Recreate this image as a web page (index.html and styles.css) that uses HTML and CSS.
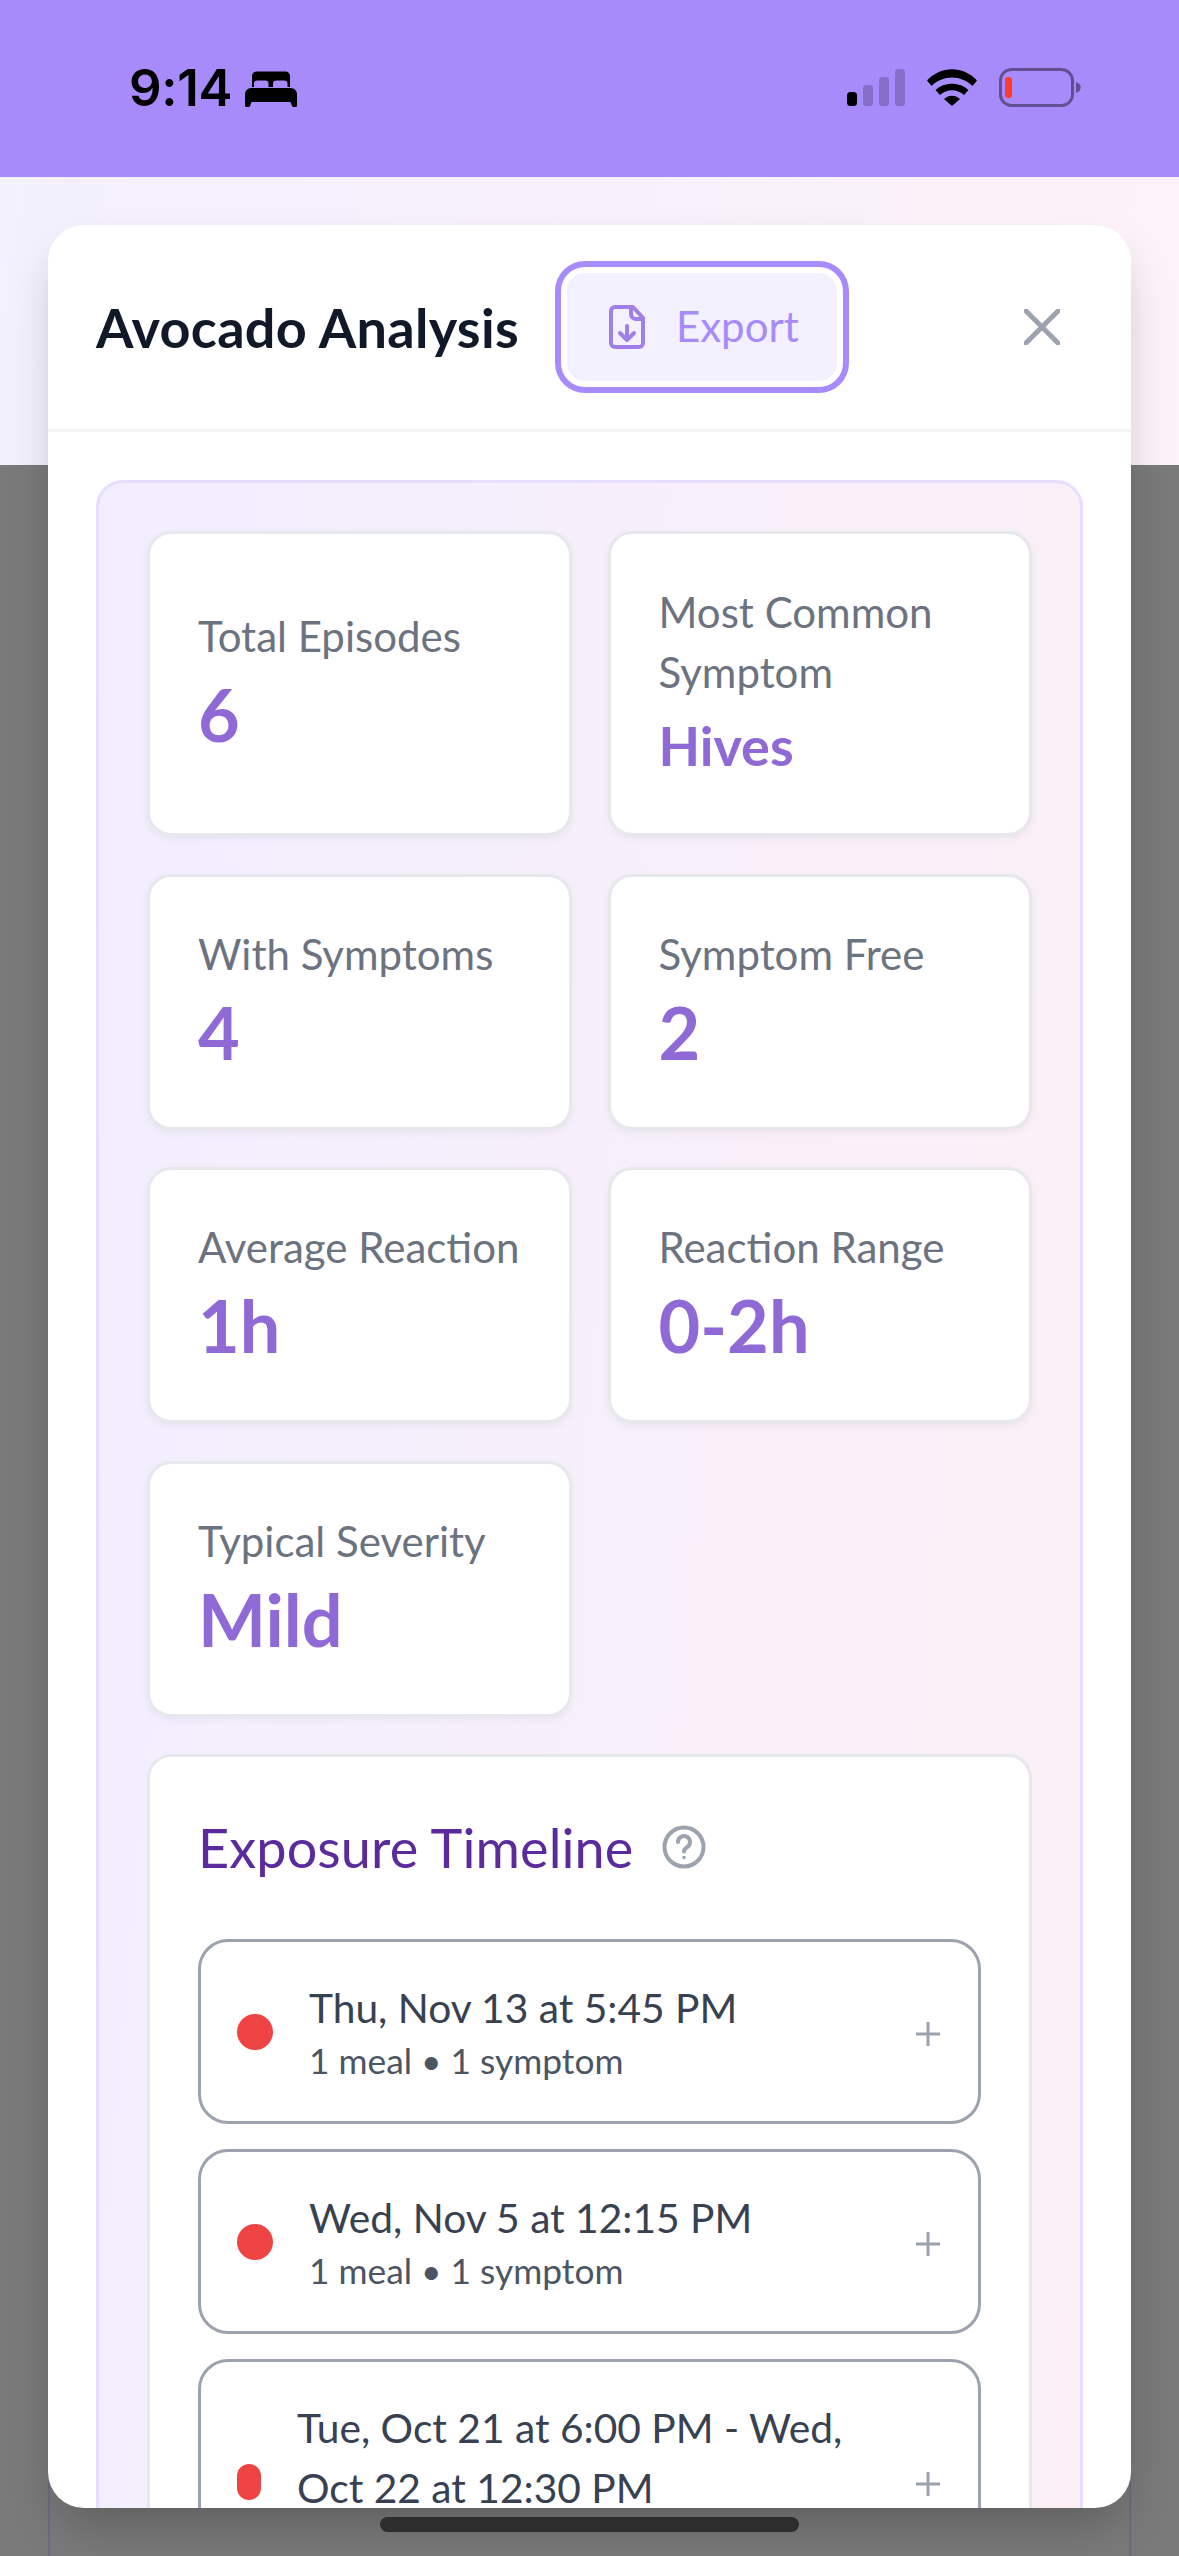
FILE: index.html
```html
<!DOCTYPE html>
<html lang="en">
<head>
<meta charset="utf-8">
<title>Avocado Analysis</title>
<link rel="stylesheet" href="styles.css">
</head>
<body>
<div class="screen">
  <header class="status">
    <div class="status-left">
      <span class="time">9:14</span>
      <svg class="bed" viewBox="0 0 52 36" aria-hidden="true"><path d="M7 16V5a4.500 4.500 0 0 1 4.500-4.500h29A4.500 4.500 0 0 1 45 5v11h-2.500v-3.500c0-2-1-3-3.500-3h-7.500c-2.500 0-3.500 1-3.500 3V16h-4.500v-3.500c0-2-1-3-3.500-3h-7.500c-2.500 0-3.500 1-3.500 3V16z"/><path d="M6 17h40a6 6 0 0 1 6 6v11.500a1.500 1.500 0 0 1-1.500 1.500h-2a1.500 1.500 0 0 1-1.500-1l-1.500-4H6.500L5 35a1.500 1.500 0 0 1-1.500 1h-2A1.500 1.500 0 0 1 0 34.500V23a6 6 0 0 1 6-6z"/></svg>
    </div>
    <div class="status-right">
      <svg class="signal" viewBox="0 0 58 37" aria-hidden="true"><rect x="0" y="23" width="10" height="14" rx="3.500"/><rect class="dim" x="16" y="16" width="10" height="21" rx="3"/><rect class="dim" x="32" y="8" width="10" height="29" rx="3"/><rect class="dim" x="48" y="0" width="10" height="37" rx="3"/></svg>
      <svg class="wifi" viewBox="0 0 50 37" aria-hidden="true"><path d="M0 11.500C14-3.500 36-3.500 50 11.500l-4.500 5.500C34 5.500 16 5.500 4.500 17z"/><path d="M8.500 21C17 12.500 33 12.500 41.500 21l-4.500 5C30.500 19.500 19.500 19.500 13 26z"/><path d="M17 30c5-4.500 11-4.500 16 0l-8 7z"/></svg>
      <svg class="battery" viewBox="0 0 82 39" aria-hidden="true"><rect class="bat-shell" x="1.500" y="1.500" width="72" height="36" rx="11"/><rect class="bat-level" x="6" y="9" width="7" height="21" rx="3"/><path class="bat-nub" d="M77 14c3 1 4.700 3 4.700 5.500S80 24 77 25z"/></svg>
    </div>
  </header>
  <div class="backdrop-top"></div>
  <div class="backdrop-rest"><div class="page-card"></div></div>

  <div class="overlay">
    <section class="modal">
      <div class="modal-head">
        <h1 class="modal-title">Avocado Analysis</h1>
        <button class="export" type="button">
          <svg class="export-icon" viewBox="0 0 36 44" aria-hidden="true"><path d="M6 2h18l10 11v25a4 4 0 0 1-4 4H6a4 4 0 0 1-4-4V6a4 4 0 0 1 4-4z"/><path d="M22 2v7a5 5 0 0 0 5 5h7"/><path d="M18 21v14M11 28l7 7 7-7"/></svg>
          <span class="export-label">Export</span>
        </button>
        <svg class="close" viewBox="0 0 36 36" aria-hidden="true"><path d="M2 2l32 32M34 2L2 34"/></svg>
      </div>
      <div class="modal-body">
        <div class="panel">
          <div class="stats">
            <div class="stat stat-tall"><div class="stat-label">Total Episodes</div><div class="stat-value">6</div></div>
            <div class="stat stat-tall"><div class="stat-label">Most Common Symptom</div><div class="stat-value stat-value-sm">Hives</div></div>
            <div class="stat"><div class="stat-label">With Symptoms</div><div class="stat-value">4</div></div>
            <div class="stat"><div class="stat-label">Symptom Free</div><div class="stat-value">2</div></div>
            <div class="stat"><div class="stat-label">Average Reaction</div><div class="stat-value">1h</div></div>
            <div class="stat"><div class="stat-label">Reaction Range</div><div class="stat-value">0-2h</div></div>
            <div class="stat"><div class="stat-label">Typical Severity</div><div class="stat-value">Mild</div></div>
          </div>
          <div class="timeline">
            <div class="timeline-head">
              <h2 class="timeline-title">Exposure Timeline</h2>
              <svg class="help" viewBox="0 0 44 44" aria-hidden="true"><circle cx="22" cy="22" r="19.500"/><path d="M16 17a6 6 0 1 1 9 5.200c-2 1.200-3 2.300-3 4.300"/><circle class="help-dot" cx="22" cy="32.500" r="1.800"/></svg>
            </div>
            <div class="rows">
              <div class="row">
                <span class="dot"></span>
                <div class="row-text"><div class="row-date">Thu, Nov 13 at 5:45 PM</div><div class="row-sub">1 meal • 1 symptom</div></div>
                <svg class="plus" viewBox="0 0 24 24" aria-hidden="true"><path d="M12 0v24M0 12h24"/></svg>
              </div>
              <div class="row">
                <span class="dot"></span>
                <div class="row-text"><div class="row-date">Wed, Nov 5 at 12:15 PM</div><div class="row-sub">1 meal • 1 symptom</div></div>
                <svg class="plus" viewBox="0 0 24 24" aria-hidden="true"><path d="M12 0v24M0 12h24"/></svg>
              </div>
              <div class="row row-long">
                <span class="dot dot-long"></span>
                <div class="row-text"><div class="row-date">Tue, Oct 21 at 6:00 PM - Wed, Oct 22 at 12:30 PM</div></div>
                <svg class="plus" viewBox="0 0 24 24" aria-hidden="true"><path d="M12 0v24M0 12h24"/></svg>
              </div>
            </div>
          </div>
        </div>
      </div>
    </section>
  </div>
  <div class="home-bar"></div>
</div>
</body>
</html>
```
FILE: styles.css
```css
* { box-sizing: border-box; }
html, body { margin: 0; padding: 0; }
body { background: #7a7a7a; font-family: "Lato", "Noto Sans", sans-serif; }
.screen {
  position: relative;
  width: 1179px;
  height: 2556px;
  overflow: hidden;
  display: flex;
  flex-direction: column;
}
.status {
  height: 177px;
  flex: none;
  background: #a78bfa;
  display: flex;
  justify-content: space-between;
  align-items: flex-start;
  padding: 67px 98px 0 129px;
}
.status-left { display: flex; align-items: center; gap: 13px; }
.time { font-family: "Inter", "Liberation Sans", sans-serif; font-weight: 600; font-size: 51px; line-height: 42px; letter-spacing: -.3px; color: #000; }
.bed { width: 52px; height: 36px; fill: #000; margin-top: 2px; }
.status-right { display: flex; align-items: center; gap: 22px; padding-top: 1px; }
.signal { width: 58px; height: 37px; fill: #000; }
.signal .dim { opacity: .2; }
.wifi { width: 50px; height: 37px; fill: #000; }
.battery { width: 82px; height: 39px; }
.bat-shell { fill: none; stroke: #000; stroke-opacity: .42; stroke-width: 3; }
.bat-level { fill: #ff3b30; }
.bat-nub { fill: #000; fill-opacity: .42; }
.backdrop-top { height: 288px; flex: none; background: linear-gradient(100deg, #f3f0ff, #fdf2f8); }
.backdrop-rest { flex: 1; background: #7a7a7a; padding: 0 48px; }
.page-card { height: 100%; border-left: 2px solid #6e6a82; border-right: 2px solid #6e6a82; }
.overlay {
  position: absolute;
  top: 225px;
  left: 48px;
  right: 48px;
}
.modal {
  height: 2283px;
  background: #fff;
  border-radius: 36px;
  overflow: hidden;
  box-shadow: 0 25px 50px -12px rgba(0,0,0,.25);
}
.modal-head {
  height: 207px;
  padding: 36px 48px;
  border-bottom: 3px solid #f3f4f6;
  display: flex;
  align-items: center;
}
.modal-title { margin: 0; font-size: 54px; font-weight: 700; letter-spacing: .3px; color: #111827; white-space: nowrap; }
.export {
  margin-left: 48px;
  width: 270px;
  height: 108px;
  border: 0;
  border-radius: 18px;
  padding: 0 0 0 42px;
  background: #f3f0ff;
  box-shadow: 0 0 0 6px #fff, 0 0 0 12px #a78bfa;
  font-family: inherit;
  display: flex;
  align-items: center;
  gap: 31px;
  color: #a78bfa;
  font-size: 42px;
}
.export-label { margin-bottom: 3px; }
.export-icon { width: 36px; height: 44px; fill: none; stroke: #a07fe8; stroke-width: 4; stroke-linecap: round; stroke-linejoin: round; }
.close { width: 36px; height: 36px; margin-left: auto; margin-right: 23px; fill: none; stroke: #9ca3af; stroke-width: 5; stroke-linecap: round; }
.modal-body { padding: 48px 48px 0; }
.panel {
  height: 2200px;
  border: 3px solid #e6deff;
  border-radius: 27px;
  background: linear-gradient(95deg, #f2eeff, #fcf0f6);
  padding: 48px;
}
.stats {
  display: grid;
  grid-template-columns: 1fr 1fr;
  column-gap: 36px;
  row-gap: 37.6px;
}
.stat {
  height: 256px;
  background: #fff;
  border: 3px solid #e7e8ec;
  border-radius: 24px;
  box-shadow: 0 3px 9px rgba(0,0,0,.05);
  padding: 0 48px;
  display: flex;
  flex-direction: column;
  justify-content: center;
}
.stat-tall { height: 305px; }
.stat-label { font-size: 42px; line-height: 60px; color: #6b7280; }
.stat-value { font-size: 72px; line-height: 96px; font-weight: 700; color: #8f6ad6; }
.stat-value-sm { font-size: 54px; line-height: 87px; margin-bottom: -3px; }
.timeline {
  margin-top: 37.6px;
  background: #fff;
  border: 3px solid #e7e8ec;
  border-radius: 24px;
  padding: 48px;
  height: 1200px;
}
.timeline-head { display: flex; align-items: center; gap: 29px; height: 84px; }
.timeline-title { margin: 0; font-size: 54px; font-weight: 400; letter-spacing: .1px; color: #5b2a9d; }
.help { width: 44px; height: 44px; fill: none; stroke: #9ca3af; stroke-width: 4; stroke-linecap: round; }
.help-dot { fill: #9ca3af; stroke: none; }
.rows { display: flex; flex-direction: column; gap: 25px; margin-top: 50px; }
.row {
  height: 185px;
  border: 3px solid #9ca3af;
  border-radius: 30px;
  display: flex;
  align-items: center;
  padding: 0 36px;
}
.row-long { height: 245px; }
.dot { width: 36px; height: 36px; border-radius: 50%; background: #ef4444; flex: none; margin-right: 36px; }
.dot-long { width: 24px; border-radius: 12px; }
.row-text { flex: 1; min-width: 0; padding-right: 6px; }
.row-long .row-text { padding-bottom: 48px; }
.row-date { font-size: 40.7px; line-height: 60px; color: #374151; }
.row-sub { font-size: 35.3px; line-height: 45px; padding-bottom: 3px; color: #4b5563; }
.plus { width: 24px; height: 24px; flex: none; margin-top: 4px; margin-left: -2px; margin-right: 2px; fill: none; stroke: #9ca3af; stroke-width: 3; }
.home-bar {
  position: absolute;
  left: 380px;
  top: 2517px;
  width: 419px;
  height: 15px;
  border-radius: 8px;
  background: #2d2d2d;
}
```
